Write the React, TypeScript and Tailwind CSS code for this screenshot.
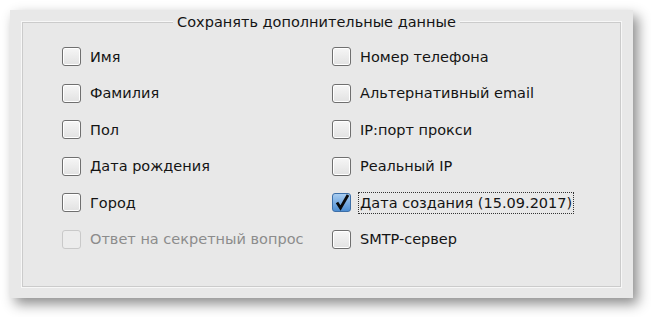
import React from 'react';

type Item = { label: string; checked?: boolean; disabled?: boolean; focused?: boolean };

const left: Item[] = [
  { label: 'Имя' },
  { label: 'Фамилия' },
  { label: 'Пол' },
  { label: 'Дата рождения' },
  { label: 'Город' },
  { label: 'Ответ на секретный вопрос', disabled: true },
];

const right: Item[] = [
  { label: 'Номер телефона' },
  { label: 'Альтернативный email' },
  { label: 'IP:порт прокси' },
  { label: 'Реальный IP' },
  { label: 'Дата создания (15.09.2017)', checked: true, focused: true },
  { label: 'SMTP-сервер' },
];

const Box: React.FC<{ checked?: boolean; disabled?: boolean }> = ({ checked, disabled }) => (
  <div
    className={
      'relative w-[19px] h-[19px] rounded-[3px] border shrink-0 ' +
      (disabled
        ? 'border-[#c9c9c9] bg-[#ececec]'
        : checked
        ? 'border-[#3d6fa8] bg-gradient-to-b from-[#a9cdf0] to-[#4d8ed2]'
        : 'border-[#6f6f6f] bg-gradient-to-b from-[#f6f6f6] to-[#e2e2e2] shadow-[inset_0_0_0_1px_#ffffff]')
    }
  >
    {checked && (
      <svg className="absolute left-[1px] top-[-1px]" width="17" height="18" viewBox="0 0 17 18">
        <path d="M3 9.5 L6.5 15 L14 2" fill="none" stroke="#0a0a0a" strokeWidth="2.8" strokeLinejoin="miter" />
      </svg>
    )}
  </div>
);

const Row: React.FC<{ item: Item }> = ({ item }) => (
  <div className="flex items-center h-[19px] gap-[9px]">
    <Box checked={item.checked} disabled={item.disabled} />
    <span
      className={
        'leading-[18px] whitespace-nowrap ' +
        (item.disabled ? 'text-[#8c8c8c]' : 'text-[#141414]') +
        (item.focused ? ' outline-1 outline-dotted outline-[#333] outline-offset-[1px]' : '')
      }
    >
      {item.label}
    </span>
  </div>
);

const App: React.FC = () => {
  return (
    <div
      className="w-[651px] h-[317px] bg-white pt-[10px] pl-[10px]"
      style={{ fontFamily: 'Tahoma, "DejaVu Sans", sans-serif' }}
    >
      <div className="w-[623px] h-[288px] bg-[#e8e8e8] shadow-[5px_6px_12px_rgba(0,0,0,0.45)] pt-[12px] pl-[12px]">
        <div className="relative w-[599px] h-[265px] border border-[#cbcbcb] shadow-[0_0_0_1px_#f7f7f7]">
          <div className="absolute top-[-10px] left-0 right-0 flex justify-center">
            <span className="bg-[#e8e8e8] px-[4px] text-[14.5px] leading-[18px] text-[#141414] mr-[10px]">
              Сохранять дополнительные данные
            </span>
          </div>
          <div className="flex pt-[24px] pl-[39px] text-[14.5px]">
            <div className="w-[270px] flex flex-col gap-[17.5px]">
              {left.map((it) => (
                <Row key={it.label} item={it} />
              ))}
            </div>
            <div className="flex flex-col gap-[17.5px]">
              {right.map((it) => (
                <Row key={it.label} item={it} />
              ))}
            </div>
          </div>
        </div>
      </div>
    </div>
  );
};

export default App;
